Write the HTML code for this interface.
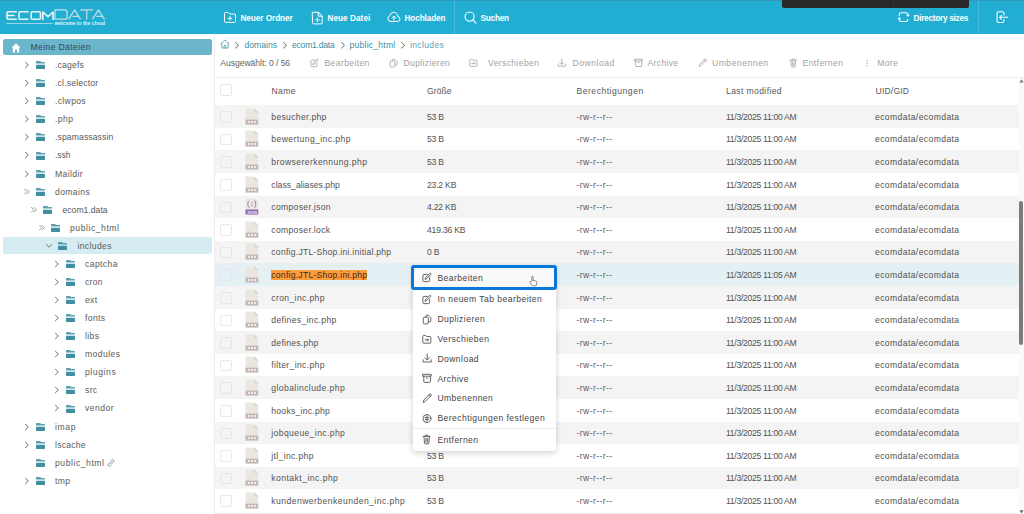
<!DOCTYPE html><html><head><meta charset="utf-8"><style>*{margin:0;padding:0;box-sizing:border-box}
html,body{width:1024px;height:514px;overflow:hidden;background:#fff;font-family:"Liberation Sans",sans-serif}
body{position:relative}
.a{position:absolute;white-space:nowrap}
svg.a{overflow:visible}
#hdr{position:absolute;left:0;top:0;width:1024px;height:34px;background:#22aed2;border-top:1px solid #3197bb}
.ht{position:absolute;color:#fff;font-weight:700;font-size:8.2px;line-height:10px;top:13.5px;white-space:nowrap}
.vd{position:absolute;top:1px;width:1px;height:33px;background:#49bcdb}
.tip{position:absolute;left:781.6px;top:0;width:187.6px;height:8.1px;background:#282828;border-radius:0 0 2px 2px}
.side{position:absolute;left:0;width:214px;height:18px}
.st{position:absolute;font-size:8.6px;color:#5a5a5a;line-height:12px;top:3px;white-space:nowrap;letter-spacing:.22px}
.fo{position:absolute;top:5px;width:9px;height:8px}
.mainb{position:absolute;left:214px;top:34px;width:1px;height:480px;background:#ececec}
.bc{position:absolute;top:38.5px;font-size:8.6px;line-height:12px;color:#3e8ea0;white-space:nowrap}
.tb{position:absolute;top:57px;font-size:8.6px;line-height:12px;color:#a2a2a2;white-space:nowrap;letter-spacing:.2px}
.hd{position:absolute;top:84.5px;font-size:8.6px;line-height:12px;color:#575757;white-space:nowrap;letter-spacing:.15px}
.row{position:absolute;left:215px;width:803.5px;height:22.6px}
.g{background:#f4f4f4}
.sel{background:#e4f0f3}
.cb{position:absolute;left:5px;top:6px;width:11.6px;height:11.6px;border:1px solid #e9e9e9;border-radius:2px;background:#fff}
.g .cb,.sel .cb{background:transparent;border-color:#e6e6e6}
.fi{position:absolute;left:29.5px;top:2.6px}
.c{position:absolute;top:5.5px;font-size:8.6px;line-height:12px;color:#525252;white-space:nowrap;letter-spacing:.15px}
.c1{left:56.3px;letter-spacing:.27px}
.c2{left:212px;letter-spacing:-.2px}
.c3{left:361.5px;color:#5a5a5a;letter-spacing:.4px}
.c4{left:511px;letter-spacing:-.29px}
.c5{left:660px;letter-spacing:.39px}
#menu{position:absolute;left:412.6px;top:266px;width:143px;height:185px;background:#fff;border-radius:3px;box-shadow:0 2px 6px rgba(0,0,0,.18)}
.mi{position:absolute;left:25.5px;font-size:8.6px;line-height:12px;color:#444;white-space:nowrap;letter-spacing:.25px}
.mic{position:absolute;left:10.5px}
#focus{position:absolute;left:411px;top:265px;width:146px;height:25px;border:3px solid #0a76d9;border-radius:3px;background:#f9f9f9}
.u{display:inline-block;transform:scaleX(.55);margin:0 -1.1px}
</style></head><body>
<div id="hdr"></div>
<svg class="a" style="left:0;top:0" width="120" height="34" viewBox="0 0 120 34">
<g fill="none" stroke="#e6f6fa" stroke-width="1.6" stroke-linejoin="round">
<path d="M16.8 11.8H8.3Q7 11.8 7 13.1V17.9Q7 19.2 8.3 19.2H16.8M7.3 15.5H14.6"/>
<path d="M28.6 11.8H20.3Q19 11.8 19 13.1V17.9Q19 19.2 20.3 19.2H28.6"/>
<path d="M32.5 11.8H39.2Q40.5 11.8 40.5 13.1V17.9Q40.5 19.2 39.2 19.2H32.5Q31.2 19.2 31.2 17.9V13.1Q31.2 11.8 32.5 11.8Z"/>
<path d="M42.8 19.9V12L48 16.6L53.1 12V19.9"/>
</g>
<g fill="none" stroke="#c5dde4" stroke-width="1.25" stroke-linejoin="round">
<path d="M55 9.8H64.8Q67.1 9.8 67.1 12.1V16.9Q67.1 19.2 64.8 19.2H55Z"/>
<path d="M68.6 19.4L74.6 9.8L80.6 19.4M72.4 16.4H79"/>
<path d="M80.4 9.8H93M86.7 9.8V19.4"/>
<path d="M92.4 19.4L98.4 9.8L104.5 19.4M96.2 16.4H102.8"/>
</g>
<path d="M6.3 23.5H52.7" stroke="#9ad6e6" stroke-width="1"/>
<text x="54.5" y="25.2" font-family="Liberation Sans" font-weight="700" font-size="4.8" fill="#dff2f8" textLength="50.5" lengthAdjust="spacingAndGlyphs">welcome to the cloud</text>
</svg>
<svg class="a" style="left:223px;top:11px" width="14" height="13" viewBox="0 0 14 13"><g fill="none" stroke="#fff" stroke-width="1" stroke-linejoin="round" stroke-linecap="round">
<path d="M1.5 2.3Q1.5 1.5 2.3 1.5H5.2L6.6 3H11.4Q12.5 3 12.5 4V10.5Q12.5 11.4 11.5 11.4H2.4Q1.5 11.4 1.5 10.5Z"/><path d="M7 5.6V9.2M5.2 7.4H8.8"/></g></svg>
<div class="ht" style="left:240.5px;letter-spacing:-.05px">Neuer Ordner</div>
<svg class="a" style="left:311px;top:10.5px" width="13" height="14" viewBox="0 0 13 14"><g fill="none" stroke="#fff" stroke-width="1" stroke-linejoin="round" stroke-linecap="round">
<path d="M1.6 1.3H7.5L11.2 5V12.1Q11.2 12.9 10.4 12.9H2.4Q1.6 12.9 1.6 12.1Z"/><path d="M7.3 1.5V5.2H11"/><path d="M6.4 7V10.6M4.6 8.8H8.2"/></g></svg>
<div class="ht" style="left:327.5px;letter-spacing:.05px">Neue Datei</div>
<svg class="a" style="left:387px;top:11px" width="14" height="12" viewBox="0 0 14 12"><g fill="none" stroke="#fff" stroke-width="1" stroke-linejoin="round" stroke-linecap="round">
<path d="M3.6 10.5H10.4Q13 10.5 13 8Q13 5.6 10.6 5.4Q10.2 1.3 6.7 1.3Q3.6 1.3 3 4.6Q0.9 5 0.9 7.6Q0.9 10.5 3.6 10.5Z"/><path d="M7 9.3V5.4M5.3 7L7 5.3L8.7 7"/></g></svg>
<div class="ht" style="left:404.5px;letter-spacing:-.1px">Hochladen</div>
<div class="vd" style="left:454.2px"></div>
<svg class="a" style="left:464px;top:10.5px" width="13" height="13" viewBox="0 0 13 13"><g fill="none" stroke="#fff" stroke-width="1.1" stroke-linecap="round">
<circle cx="5.6" cy="5.6" r="4.6"/><path d="M8.9 8.9L12 12.2"/></g></svg>
<div class="ht" style="left:480.5px;letter-spacing:-.2px">Suchen</div>
<div class="tip"></div><div class="a" style="left:893px;top:0;width:1px;height:5px;background:#363636"></div>
<svg class="a" style="left:896px;top:11px" width="15" height="13" viewBox="0 0 15 13"><g fill="none" stroke="#fff" stroke-width="1.1" stroke-linecap="round" stroke-linejoin="round">
<path d="M3.3 4.6V3.5Q3.3 1.7 5.1 1.7H9.8Q11.6 1.7 11.9 3.6"/><path d="M11.7 8.4V8.8Q11.7 10.5 9.9 10.5H5.3Q3.5 10.5 3.5 8.7V7.6"/></g>
<path d="M10.1 3.7H13.9L12 5.9Z M1.4 8.3H5.2L3.3 6.1Z" fill="#fff"/></svg>
<div class="ht" style="left:913.5px;letter-spacing:-.25px">Directory sizes</div>
<div class="vd" style="left:978px"></div>
<svg class="a" style="left:995px;top:11px" width="14" height="13" viewBox="0 0 14 13"><g fill="none" stroke="#fff" stroke-width="1.05" stroke-linecap="round" stroke-linejoin="round">
<path d="M8.9 4V2Q8.9 0.7 7.6 0.7H3.4Q2.1 0.7 2.1 2V10.2Q2.1 11.5 3.4 11.5H7.6Q8.9 11.5 8.9 10.2V8.6"/><path d="M12.8 6.3H4.6M6.5 4.3L4.5 6.3L6.5 8.3"/></g></svg>
<div class="a" style="left:3px;top:38.7px;width:208.6px;height:16.4px;background:#6cb6cb;border-radius:2.5px"></div>
<svg class="a" style="left:11px;top:42.5px" width="10" height="10" viewBox="0 0 10 10"><path d="M5 0.6L0.5 4.6H1.8V9.4H4V6.6H6V9.4H8.2V4.6H9.5Z" fill="#fff"/></svg>
<div class="a" style="left:30.5px;top:40.5px;font-size:8.6px;line-height:12px;color:#2d4a5c;letter-spacing:.375px">Meine Dateien</div>
<svg class="a" style="left:24.5px;top:62.099999999999994px" width="4" height="6" viewBox="0 0 4 6"><path d="M0.5 0.3L3.3 3L0.5 5.7" fill="none" stroke="#666" stroke-width="0.95" stroke-linecap="round" stroke-linejoin="round"/></svg>
<svg class="a" style="left:36.00px;top:61.199999999999996px" width="9" height="8" viewBox="0 0 9 8"><path d="M0.6 0H4.2L5.2 1H8.4Q9 1 9 1.6V2.6H0V0.6Q0 0 0.6 0Z" fill="#5d9fb0"/><rect x="0" y="3.7" width="9" height="4.3" rx="0.7" fill="#3f8fa1"/></svg>
<div class="st" style="left:55.0px;top:59.099999999999994px;letter-spacing:0.183px">.cagefs</div>
<svg class="a" style="left:24.5px;top:80.17px" width="4" height="6" viewBox="0 0 4 6"><path d="M0.5 0.3L3.3 3L0.5 5.7" fill="none" stroke="#666" stroke-width="0.95" stroke-linecap="round" stroke-linejoin="round"/></svg>
<svg class="a" style="left:36.00px;top:79.27px" width="9" height="8" viewBox="0 0 9 8"><path d="M0.6 0H4.2L5.2 1H8.4Q9 1 9 1.6V2.6H0V0.6Q0 0 0.6 0Z" fill="#5d9fb0"/><rect x="0" y="3.7" width="9" height="4.3" rx="0.7" fill="#3f8fa1"/></svg>
<div class="st" style="left:55.0px;top:77.17px;letter-spacing:0.182px">.cl.selector</div>
<svg class="a" style="left:24.5px;top:98.24px" width="4" height="6" viewBox="0 0 4 6"><path d="M0.5 0.3L3.3 3L0.5 5.7" fill="none" stroke="#666" stroke-width="0.95" stroke-linecap="round" stroke-linejoin="round"/></svg>
<svg class="a" style="left:36.00px;top:97.33999999999999px" width="9" height="8" viewBox="0 0 9 8"><path d="M0.6 0H4.2L5.2 1H8.4Q9 1 9 1.6V2.6H0V0.6Q0 0 0.6 0Z" fill="#5d9fb0"/><rect x="0" y="3.7" width="9" height="4.3" rx="0.7" fill="#3f8fa1"/></svg>
<div class="st" style="left:55.0px;top:95.24px;letter-spacing:0.333px">.clwpos</div>
<svg class="a" style="left:24.5px;top:116.31px" width="4" height="6" viewBox="0 0 4 6"><path d="M0.5 0.3L3.3 3L0.5 5.7" fill="none" stroke="#666" stroke-width="0.95" stroke-linecap="round" stroke-linejoin="round"/></svg>
<svg class="a" style="left:36.00px;top:115.41px" width="9" height="8" viewBox="0 0 9 8"><path d="M0.6 0H4.2L5.2 1H8.4Q9 1 9 1.6V2.6H0V0.6Q0 0 0.6 0Z" fill="#5d9fb0"/><rect x="0" y="3.7" width="9" height="4.3" rx="0.7" fill="#3f8fa1"/></svg>
<div class="st" style="left:55.0px;top:113.31px;letter-spacing:0.4px">.php</div>
<svg class="a" style="left:24.5px;top:134.38px" width="4" height="6" viewBox="0 0 4 6"><path d="M0.5 0.3L3.3 3L0.5 5.7" fill="none" stroke="#666" stroke-width="0.95" stroke-linecap="round" stroke-linejoin="round"/></svg>
<svg class="a" style="left:36.00px;top:133.48px" width="9" height="8" viewBox="0 0 9 8"><path d="M0.6 0H4.2L5.2 1H8.4Q9 1 9 1.6V2.6H0V0.6Q0 0 0.6 0Z" fill="#5d9fb0"/><rect x="0" y="3.7" width="9" height="4.3" rx="0.7" fill="#3f8fa1"/></svg>
<div class="st" style="left:55.0px;top:131.38px;letter-spacing:0.117px">.spamassassin</div>
<svg class="a" style="left:24.5px;top:152.45px" width="4" height="6" viewBox="0 0 4 6"><path d="M0.5 0.3L3.3 3L0.5 5.7" fill="none" stroke="#666" stroke-width="0.95" stroke-linecap="round" stroke-linejoin="round"/></svg>
<svg class="a" style="left:36.00px;top:151.54999999999998px" width="9" height="8" viewBox="0 0 9 8"><path d="M0.6 0H4.2L5.2 1H8.4Q9 1 9 1.6V2.6H0V0.6Q0 0 0.6 0Z" fill="#5d9fb0"/><rect x="0" y="3.7" width="9" height="4.3" rx="0.7" fill="#3f8fa1"/></svg>
<div class="st" style="left:55.0px;top:149.45px;letter-spacing:-0.1px">.ssh</div>
<svg class="a" style="left:24.5px;top:170.52px" width="4" height="6" viewBox="0 0 4 6"><path d="M0.5 0.3L3.3 3L0.5 5.7" fill="none" stroke="#666" stroke-width="0.95" stroke-linecap="round" stroke-linejoin="round"/></svg>
<svg class="a" style="left:36.00px;top:169.62px" width="9" height="8" viewBox="0 0 9 8"><path d="M0.6 0H4.2L5.2 1H8.4Q9 1 9 1.6V2.6H0V0.6Q0 0 0.6 0Z" fill="#5d9fb0"/><rect x="0" y="3.7" width="9" height="4.3" rx="0.7" fill="#3f8fa1"/></svg>
<div class="st" style="left:55.0px;top:167.52px;letter-spacing:0.383px">Maildir</div>
<svg class="a" style="left:23.8px;top:188.89000000000001px" width="6" height="6" viewBox="0 0 6 6"><path d="M0.5 0.4L2.8 2.7L0.5 5M3 0.4L5.3 2.7L3 5" fill="none" stroke="#8a8a8a" stroke-width="0.85" stroke-linecap="round" stroke-linejoin="round"/></svg>
<svg class="a" style="left:36.00px;top:187.69px" width="9" height="8" viewBox="0 0 9 8"><path d="M0.6 0H4.2L5.2 1H8.4Q9 1 9 1.6V2.6H0V0.6Q0 0 0.6 0Z" fill="#5d9fb0"/><rect x="0" y="3.7" width="9" height="4.3" rx="0.7" fill="#3f8fa1"/></svg>
<div class="st" style="left:55.0px;top:185.59px;letter-spacing:0.383px">domains</div>
<svg class="a" style="left:31.3px;top:206.96px" width="6" height="6" viewBox="0 0 6 6"><path d="M0.5 0.4L2.8 2.7L0.5 5M3 0.4L5.3 2.7L3 5" fill="none" stroke="#8a8a8a" stroke-width="0.85" stroke-linecap="round" stroke-linejoin="round"/></svg>
<svg class="a" style="left:43.45px;top:205.76px" width="9" height="8" viewBox="0 0 9 8"><path d="M0.6 0H4.2L5.2 1H8.4Q9 1 9 1.6V2.6H0V0.6Q0 0 0.6 0Z" fill="#5d9fb0"/><rect x="0" y="3.7" width="9" height="4.3" rx="0.7" fill="#3f8fa1"/></svg>
<div class="st" style="left:62.5px;top:203.66px;letter-spacing:0.022px">ecom1.data</div>
<svg class="a" style="left:38.8px;top:225.03px" width="6" height="6" viewBox="0 0 6 6"><path d="M0.5 0.4L2.8 2.7L0.5 5M3 0.4L5.3 2.7L3 5" fill="none" stroke="#8a8a8a" stroke-width="0.85" stroke-linecap="round" stroke-linejoin="round"/></svg>
<svg class="a" style="left:50.90px;top:223.82999999999998px" width="9" height="8" viewBox="0 0 9 8"><path d="M0.6 0H4.2L5.2 1H8.4Q9 1 9 1.6V2.6H0V0.6Q0 0 0.6 0Z" fill="#5d9fb0"/><rect x="0" y="3.7" width="9" height="4.3" rx="0.7" fill="#3f8fa1"/></svg>
<div class="st" style="left:70.0px;top:221.73px;letter-spacing:0.55px">public_html</div>
<div class="a" style="left:3px;top:237.20px;width:208.6px;height:17px;background:#d5ecf2;border-radius:2px"></div>
<svg class="a" style="left:45.8px;top:243.90px" width="6" height="4" viewBox="0 0 6 4"><path d="M0.4 0.6L3 3.2L5.6 0.6" fill="none" stroke="#666" stroke-width="0.95" stroke-linecap="round" stroke-linejoin="round"/></svg>
<svg class="a" style="left:58.35px;top:241.9px" width="9" height="8" viewBox="0 0 9 8"><path d="M0.6 0H4.2L5.2 1H8.4Q9 1 9 1.6V2.6H0V0.6Q0 0 0.6 0Z" fill="#5d9fb0"/><rect x="0" y="3.7" width="9" height="4.3" rx="0.7" fill="#3f8fa1"/></svg>
<div class="st" style="left:77.5px;top:239.8px;letter-spacing:0.343px">includes</div>
<svg class="a" style="left:54.5px;top:260.87px" width="4" height="6" viewBox="0 0 4 6"><path d="M0.5 0.3L3.3 3L0.5 5.7" fill="none" stroke="#666" stroke-width="0.95" stroke-linecap="round" stroke-linejoin="round"/></svg>
<svg class="a" style="left:65.80px;top:259.97px" width="9" height="8" viewBox="0 0 9 8"><path d="M0.6 0H4.2L5.2 1H8.4Q9 1 9 1.6V2.6H0V0.6Q0 0 0.6 0Z" fill="#5d9fb0"/><rect x="0" y="3.7" width="9" height="4.3" rx="0.7" fill="#3f8fa1"/></svg>
<div class="st" style="left:85.0px;top:257.87px;letter-spacing:0.4px">captcha</div>
<svg class="a" style="left:54.5px;top:278.94px" width="4" height="6" viewBox="0 0 4 6"><path d="M0.5 0.3L3.3 3L0.5 5.7" fill="none" stroke="#666" stroke-width="0.95" stroke-linecap="round" stroke-linejoin="round"/></svg>
<svg class="a" style="left:65.80px;top:278.04px" width="9" height="8" viewBox="0 0 9 8"><path d="M0.6 0H4.2L5.2 1H8.4Q9 1 9 1.6V2.6H0V0.6Q0 0 0.6 0Z" fill="#5d9fb0"/><rect x="0" y="3.7" width="9" height="4.3" rx="0.7" fill="#3f8fa1"/></svg>
<div class="st" style="left:85.0px;top:275.94px;letter-spacing:0.3px">cron</div>
<svg class="a" style="left:54.5px;top:297.01px" width="4" height="6" viewBox="0 0 4 6"><path d="M0.5 0.3L3.3 3L0.5 5.7" fill="none" stroke="#666" stroke-width="0.95" stroke-linecap="round" stroke-linejoin="round"/></svg>
<svg class="a" style="left:65.80px;top:296.11px" width="9" height="8" viewBox="0 0 9 8"><path d="M0.6 0H4.2L5.2 1H8.4Q9 1 9 1.6V2.6H0V0.6Q0 0 0.6 0Z" fill="#5d9fb0"/><rect x="0" y="3.7" width="9" height="4.3" rx="0.7" fill="#3f8fa1"/></svg>
<div class="st" style="left:85.0px;top:294.01px;letter-spacing:0.3px">ext</div>
<svg class="a" style="left:54.5px;top:315.08px" width="4" height="6" viewBox="0 0 4 6"><path d="M0.5 0.3L3.3 3L0.5 5.7" fill="none" stroke="#666" stroke-width="0.95" stroke-linecap="round" stroke-linejoin="round"/></svg>
<svg class="a" style="left:65.80px;top:314.18px" width="9" height="8" viewBox="0 0 9 8"><path d="M0.6 0H4.2L5.2 1H8.4Q9 1 9 1.6V2.6H0V0.6Q0 0 0.6 0Z" fill="#5d9fb0"/><rect x="0" y="3.7" width="9" height="4.3" rx="0.7" fill="#3f8fa1"/></svg>
<div class="st" style="left:85.0px;top:312.08px;letter-spacing:0.375px">fonts</div>
<svg class="a" style="left:54.5px;top:333.15px" width="4" height="6" viewBox="0 0 4 6"><path d="M0.5 0.3L3.3 3L0.5 5.7" fill="none" stroke="#666" stroke-width="0.95" stroke-linecap="round" stroke-linejoin="round"/></svg>
<svg class="a" style="left:65.80px;top:332.25px" width="9" height="8" viewBox="0 0 9 8"><path d="M0.6 0H4.2L5.2 1H8.4Q9 1 9 1.6V2.6H0V0.6Q0 0 0.6 0Z" fill="#5d9fb0"/><rect x="0" y="3.7" width="9" height="4.3" rx="0.7" fill="#3f8fa1"/></svg>
<div class="st" style="left:85.0px;top:330.15px;letter-spacing:0.4px">libs</div>
<svg class="a" style="left:54.5px;top:351.22px" width="4" height="6" viewBox="0 0 4 6"><path d="M0.5 0.3L3.3 3L0.5 5.7" fill="none" stroke="#666" stroke-width="0.95" stroke-linecap="round" stroke-linejoin="round"/></svg>
<svg class="a" style="left:65.80px;top:350.32000000000005px" width="9" height="8" viewBox="0 0 9 8"><path d="M0.6 0H4.2L5.2 1H8.4Q9 1 9 1.6V2.6H0V0.6Q0 0 0.6 0Z" fill="#5d9fb0"/><rect x="0" y="3.7" width="9" height="4.3" rx="0.7" fill="#3f8fa1"/></svg>
<div class="st" style="left:85.0px;top:348.22px;letter-spacing:0.433px">modules</div>
<svg class="a" style="left:54.5px;top:369.29px" width="4" height="6" viewBox="0 0 4 6"><path d="M0.5 0.3L3.3 3L0.5 5.7" fill="none" stroke="#666" stroke-width="0.95" stroke-linecap="round" stroke-linejoin="round"/></svg>
<svg class="a" style="left:65.80px;top:368.39000000000004px" width="9" height="8" viewBox="0 0 9 8"><path d="M0.6 0H4.2L5.2 1H8.4Q9 1 9 1.6V2.6H0V0.6Q0 0 0.6 0Z" fill="#5d9fb0"/><rect x="0" y="3.7" width="9" height="4.3" rx="0.7" fill="#3f8fa1"/></svg>
<div class="st" style="left:85.0px;top:366.29px;letter-spacing:0.583px">plugins</div>
<svg class="a" style="left:54.5px;top:387.36px" width="4" height="6" viewBox="0 0 4 6"><path d="M0.5 0.3L3.3 3L0.5 5.7" fill="none" stroke="#666" stroke-width="0.95" stroke-linecap="round" stroke-linejoin="round"/></svg>
<svg class="a" style="left:65.80px;top:386.46000000000004px" width="9" height="8" viewBox="0 0 9 8"><path d="M0.6 0H4.2L5.2 1H8.4Q9 1 9 1.6V2.6H0V0.6Q0 0 0.6 0Z" fill="#5d9fb0"/><rect x="0" y="3.7" width="9" height="4.3" rx="0.7" fill="#3f8fa1"/></svg>
<div class="st" style="left:85.0px;top:384.36px;letter-spacing:0.35px">src</div>
<svg class="a" style="left:54.5px;top:405.43px" width="4" height="6" viewBox="0 0 4 6"><path d="M0.5 0.3L3.3 3L0.5 5.7" fill="none" stroke="#666" stroke-width="0.95" stroke-linecap="round" stroke-linejoin="round"/></svg>
<svg class="a" style="left:65.80px;top:404.53000000000003px" width="9" height="8" viewBox="0 0 9 8"><path d="M0.6 0H4.2L5.2 1H8.4Q9 1 9 1.6V2.6H0V0.6Q0 0 0.6 0Z" fill="#5d9fb0"/><rect x="0" y="3.7" width="9" height="4.3" rx="0.7" fill="#3f8fa1"/></svg>
<div class="st" style="left:85.0px;top:402.43px;letter-spacing:0.46px">vendor</div>
<svg class="a" style="left:24.5px;top:423.5px" width="4" height="6" viewBox="0 0 4 6"><path d="M0.5 0.3L3.3 3L0.5 5.7" fill="none" stroke="#666" stroke-width="0.95" stroke-linecap="round" stroke-linejoin="round"/></svg>
<svg class="a" style="left:36.00px;top:422.6px" width="9" height="8" viewBox="0 0 9 8"><path d="M0.6 0H4.2L5.2 1H8.4Q9 1 9 1.6V2.6H0V0.6Q0 0 0.6 0Z" fill="#5d9fb0"/><rect x="0" y="3.7" width="9" height="4.3" rx="0.7" fill="#3f8fa1"/></svg>
<div class="st" style="left:55.0px;top:420.5px;letter-spacing:0.6px">imap</div>
<svg class="a" style="left:24.5px;top:441.57px" width="4" height="6" viewBox="0 0 4 6"><path d="M0.5 0.3L3.3 3L0.5 5.7" fill="none" stroke="#666" stroke-width="0.95" stroke-linecap="round" stroke-linejoin="round"/></svg>
<svg class="a" style="left:36.00px;top:440.67px" width="9" height="8" viewBox="0 0 9 8"><path d="M0.6 0H4.2L5.2 1H8.4Q9 1 9 1.6V2.6H0V0.6Q0 0 0.6 0Z" fill="#5d9fb0"/><rect x="0" y="3.7" width="9" height="4.3" rx="0.7" fill="#3f8fa1"/></svg>
<div class="st" style="left:55.0px;top:438.57px;letter-spacing:0.25px">lscache</div>
<svg class="a" style="left:36.00px;top:458.74px" width="9" height="8" viewBox="0 0 9 8"><path d="M0.6 0H4.2L5.2 1H8.4Q9 1 9 1.6V2.6H0V0.6Q0 0 0.6 0Z" fill="#5d9fb0"/><rect x="0" y="3.7" width="9" height="4.3" rx="0.7" fill="#3f8fa1"/></svg>
<div class="st" style="left:55.0px;top:456.64px;letter-spacing:0.55px">public_html</div>
<svg class="a" style="left:106.5px;top:459.03999999999996px" width="8" height="8" viewBox="0 0 8 8"><g fill="none" stroke="#888" stroke-width="0.8" stroke-linecap="round"><path d="M3.4 2.2L4.6 1Q5.6 0 6.6 1Q7.6 2 6.6 3L5.4 4.2"/><path d="M4.6 5.8L3.4 7Q2.4 8 1.4 7Q0.4 6 1.4 5L2.6 3.8"/><path d="M2.8 5.2L5.2 2.8"/></g></svg>
<svg class="a" style="left:24.5px;top:477.71px" width="4" height="6" viewBox="0 0 4 6"><path d="M0.5 0.3L3.3 3L0.5 5.7" fill="none" stroke="#666" stroke-width="0.95" stroke-linecap="round" stroke-linejoin="round"/></svg>
<svg class="a" style="left:36.00px;top:476.81px" width="9" height="8" viewBox="0 0 9 8"><path d="M0.6 0H4.2L5.2 1H8.4Q9 1 9 1.6V2.6H0V0.6Q0 0 0.6 0Z" fill="#5d9fb0"/><rect x="0" y="3.7" width="9" height="4.3" rx="0.7" fill="#3f8fa1"/></svg>
<div class="st" style="left:55.0px;top:474.71px;letter-spacing:0.4px">tmp</div>
<div class="mainb"></div>
<svg class="a" style="left:220.2px;top:38.9px" width="10" height="10" viewBox="0 0 10 10"><g fill="none" stroke="#5ea5b7" stroke-width="0.9" stroke-linejoin="round" stroke-linecap="round"><path d="M0.8 4.9L5 0.9L9.2 4.9M1.8 4V8.5Q1.8 9 2.3 9H7.7Q8.2 9 8.2 8.5V4"/><path d="M4 9V6.6H6V9"/></g></svg>
<svg class="a" style="left:235.2px;top:41.5px" width="5" height="7" viewBox="0 0 5 7"><path d="M0.6 0.5L3.5 3.3L0.6 6.1" fill="none" stroke="#555" stroke-width="0.9" stroke-linecap="round" stroke-linejoin="round"/></svg>
<svg class="a" style="left:282.8px;top:41.5px" width="5" height="7" viewBox="0 0 5 7"><path d="M0.6 0.5L3.5 3.3L0.6 6.1" fill="none" stroke="#555" stroke-width="0.9" stroke-linecap="round" stroke-linejoin="round"/></svg>
<svg class="a" style="left:340.8px;top:41.5px" width="5" height="7" viewBox="0 0 5 7"><path d="M0.6 0.5L3.5 3.3L0.6 6.1" fill="none" stroke="#555" stroke-width="0.9" stroke-linecap="round" stroke-linejoin="round"/></svg>
<svg class="a" style="left:401px;top:41.5px" width="5" height="7" viewBox="0 0 5 7"><path d="M0.6 0.5L3.5 3.3L0.6 6.1" fill="none" stroke="#555" stroke-width="0.9" stroke-linecap="round" stroke-linejoin="round"/></svg>
<div class="bc" style="left:244.5px;letter-spacing:.02px">domains</div>
<div class="bc" style="left:292px;letter-spacing:-.24px">ecom1.data</div>
<div class="bc" style="left:349.5px;letter-spacing:.22px">public_html</div>
<div class="bc" style="left:410px;color:#5ca3b5;letter-spacing:.34px">includes</div>
<div class="tb" style="left:220.3px;color:#646464;letter-spacing:-.05px">Ausgewählt: 0 / 56</div>
<svg class="a" style="left:309.5px;top:58px" width="10" height="10" viewBox="0 0 11 11"><g fill="none" stroke="#a9a9a9" stroke-width="0.95" stroke-linejoin="round" stroke-linecap="round"><path d="M5.2 2.4H1.9Q0.9 2.4 0.9 3.4V8.6Q0.9 9.6 1.9 9.6H6.6Q7.6 9.6 7.6 8.6V5.6"/><path d="M3.2 7.1L3.5 5.6L7.6 1.5Q8.2 1 8.7 1.5Q9.2 2 8.7 2.6L4.6 6.7Z"/></g></svg>
<div class="tb" style="left:324.5px;letter-spacing:0.37px">Bearbeiten</div>
<svg class="a" style="left:389.0px;top:58px" width="10" height="10" viewBox="0 0 11 11"><g fill="none" stroke="#a9a9a9" stroke-width="0.95" stroke-linejoin="round" stroke-linecap="round"><path d="M3.9 3V2.1Q3.9 1.3 4.7 1.3H6.6L8.8 3.5V7Q8.8 7.8 8 7.8H6.5"/><path d="M1.3 4Q1.3 3.2 2.1 3.2H5.5Q6.3 3.2 6.3 4V9.1Q6.3 9.9 5.5 9.9H2.1Q1.3 9.9 1.3 9.1Z"/></g></svg>
<div class="tb" style="left:403.5px;letter-spacing:0.34px">Duplizieren</div>
<svg class="a" style="left:469.0px;top:58px" width="10" height="10" viewBox="0 0 11 11"><g fill="none" stroke="#a9a9a9" stroke-width="0.95" stroke-linejoin="round" stroke-linecap="round"><path d="M0.8 2.2Q0.8 1.4 1.6 1.4H3.6L4.6 2.5H8Q8.8 2.5 8.8 3.3V8.4Q8.8 9.2 8 9.2H1.6Q0.8 9.2 0.8 8.4Z"/><path d="M3 5.9H6.4M5.1 4.6L6.4 5.9L5.1 7.2"/></g></svg>
<div class="tb" style="left:488px;letter-spacing:0.37px">Verschieben</div>
<svg class="a" style="left:557.0px;top:58px" width="10" height="10" viewBox="0 0 11 11"><g fill="none" stroke="#a9a9a9" stroke-width="0.95" stroke-linejoin="round" stroke-linecap="round"><path d="M5.2 1V6.8M3 4.8L5.2 7L7.4 4.8"/><path d="M1.2 6.8V9H9.2V6.8"/></g></svg>
<div class="tb" style="left:572.5px;letter-spacing:0.5px">Download</div>
<svg class="a" style="left:633.5px;top:58px" width="10" height="10" viewBox="0 0 11 11"><g fill="none" stroke="#a9a9a9" stroke-width="0.95" stroke-linejoin="round" stroke-linecap="round"><path d="M1 1.3H9.2V3.2H1Z"/><path d="M1.8 3.2V8.6Q1.8 9.4 2.6 9.4H7.6Q8.4 9.4 8.4 8.6V3.2"/><path d="M4.4 5H5.8"/></g></svg>
<div class="tb" style="left:647.5px;letter-spacing:0.33px">Archive</div>
<svg class="a" style="left:697.5px;top:58px" width="10" height="10" viewBox="0 0 11 11"><g fill="none" stroke="#a9a9a9" stroke-width="0.95" stroke-linejoin="round" stroke-linecap="round"><path d="M1.3 9.2L1.8 7L7.6 1.2Q8.3 0.5 9 1.2Q9.6 1.9 9 2.6L3.2 8.4Z"/><path d="M6.8 2L8.3 3.5"/></g></svg>
<div class="tb" style="left:712px;letter-spacing:0.5px">Umbenennen</div>
<svg class="a" style="left:788.5px;top:58px" width="10" height="10" viewBox="0 0 11 11"><g fill="none" stroke="#a9a9a9" stroke-width="0.95" stroke-linejoin="round" stroke-linecap="round"><path d="M1.2 2.4H8.2M3.4 2.2V1.2H6V2.2"/><path d="M2 2.6L2.5 9.2Q2.6 9.8 3.2 9.8H6.2Q6.8 9.8 6.9 9.2L7.4 2.6"/><path d="M4 4.4V8.2M5.4 4.4V8.2"/></g></svg>
<div class="tb" style="left:802.5px;letter-spacing:0.4px">Entfernen</div>
<div class="a" style="left:866.3px;top:59.8px;width:1.3px;height:1.3px;background:#b5b5b5;border-radius:1px;box-shadow:0 2.6px 0 #b5b5b5,0 5.2px 0 #b5b5b5"></div>
<div class="tb" style="left:877.3px;letter-spacing:.3px">More</div>
<div class="a" style="left:215px;top:77px;width:809px;height:1px;background:#ededed"></div>
<div class="a" style="left:220px;top:84px;width:11.6px;height:11.6px;border:1px solid #e6e6e6;border-radius:2px"></div>
<div class="hd" style="left:271.5px;letter-spacing:0.37px">Name</div>
<div class="hd" style="left:427px;letter-spacing:0.07px">Größe</div>
<div class="hd" style="left:576.5px;letter-spacing:0.5px">Berechtigungen</div>
<div class="hd" style="left:726px;letter-spacing:0.375px">Last modified</div>
<div class="hd" style="left:875.5px;letter-spacing:0.18px">UID/GID</div>
<div class="a" style="left:1018.5px;top:78px;width:5.5px;height:436px;background:#fafafa"></div>
<svg class="a" style="left:1019px;top:78.5px" width="5" height="4" viewBox="0 0 5 4"><path d="M2.5 0.3L4.6 3.6H0.4Z" fill="#7d7d7d"/></svg>
<svg class="a" style="left:1019px;top:509.5px" width="5" height="4" viewBox="0 0 5 4"><path d="M2.5 3.6L4.6 0.3H0.4Z" fill="#6d6d6d"/></svg>
<div class="a" style="left:1019.2px;top:201px;width:3.4px;height:143.5px;background:#7b7b7b;border-radius:2px"></div>
<div class="row g" style="top:105.25px">
<div class="cb"></div>
<svg class="fi" width="14" height="17" viewBox="0 0 14 17"><path d="M0.5 0.6H9.6L13.3 4.3V11.5H0.5Z" fill="#e9e7df"/><path d="M9.6 0.6L13.3 4.3H9.6Z" fill="#d8d4c9"/><rect x="0.5" y="11.5" width="12.8" height="5.1" fill="#c5b8b4"/><circle cx="4" cy="14.05" r="0.95" fill="#fff"/><circle cx="7.05" cy="14.05" r="0.95" fill="#fff"/><circle cx="10.1" cy="14.05" r="0.95" fill="#fff"/></svg>
<div class="c c1" style="letter-spacing:0.314px">besucher.php</div>
<div class="c c2">53 B</div>
<div class="c c3">-rw-r--r--</div>
<div class="c c4">11/3/2025 11:00 AM</div>
<div class="c c5">ecomdata/ecomdata</div>
</div>
<div class="row" style="top:127.85px">
<div class="cb"></div>
<svg class="fi" width="14" height="17" viewBox="0 0 14 17"><path d="M0.5 0.6H9.6L13.3 4.3V11.5H0.5Z" fill="#e9e7df"/><path d="M9.6 0.6L13.3 4.3H9.6Z" fill="#d8d4c9"/><rect x="0.5" y="11.5" width="12.8" height="5.1" fill="#c5b8b4"/><circle cx="4" cy="14.05" r="0.95" fill="#fff"/><circle cx="7.05" cy="14.05" r="0.95" fill="#fff"/><circle cx="10.1" cy="14.05" r="0.95" fill="#fff"/></svg>
<div class="c c1" style="letter-spacing:0.406px">bewertung_inc.php</div>
<div class="c c2">53 B</div>
<div class="c c3">-rw-r--r--</div>
<div class="c c4">11/3/2025 11:00 AM</div>
<div class="c c5">ecomdata/ecomdata</div>
</div>
<div class="row g" style="top:150.45px">
<div class="cb"></div>
<svg class="fi" width="14" height="17" viewBox="0 0 14 17"><path d="M0.5 0.6H9.6L13.3 4.3V11.5H0.5Z" fill="#e9e7df"/><path d="M9.6 0.6L13.3 4.3H9.6Z" fill="#d8d4c9"/><rect x="0.5" y="11.5" width="12.8" height="5.1" fill="#c5b8b4"/><circle cx="4" cy="14.05" r="0.95" fill="#fff"/><circle cx="7.05" cy="14.05" r="0.95" fill="#fff"/><circle cx="10.1" cy="14.05" r="0.95" fill="#fff"/></svg>
<div class="c c1" style="letter-spacing:0.411px">browsererkennung.php</div>
<div class="c c2">53 B</div>
<div class="c c3">-rw-r--r--</div>
<div class="c c4">11/3/2025 11:00 AM</div>
<div class="c c5">ecomdata/ecomdata</div>
</div>
<div class="row" style="top:173.05px">
<div class="cb"></div>
<svg class="fi" width="14" height="17" viewBox="0 0 14 17"><path d="M0.5 0.6H9.6L13.3 4.3V11.5H0.5Z" fill="#e9e7df"/><path d="M9.6 0.6L13.3 4.3H9.6Z" fill="#d8d4c9"/><rect x="0.5" y="11.5" width="12.8" height="5.1" fill="#c5b8b4"/><circle cx="4" cy="14.05" r="0.95" fill="#fff"/><circle cx="7.05" cy="14.05" r="0.95" fill="#fff"/><circle cx="10.1" cy="14.05" r="0.95" fill="#fff"/></svg>
<div class="c c1" style="letter-spacing:0.037px">class_aliases.php</div>
<div class="c c2">23.2 KB</div>
<div class="c c3">-rw-r--r--</div>
<div class="c c4">11/3/2025 11:00 AM</div>
<div class="c c5">ecomdata/ecomdata</div>
</div>
<div class="row g" style="top:195.65px">
<div class="cb"></div>
<svg class="fi" width="14" height="17" viewBox="0 0 14 17"><path d="M0.5 0.6H9.6L13.3 4.3V11.5H0.5Z" fill="#ebe9e2"/><path d="M9.6 0.6L13.3 4.3H9.6Z" fill="#d8d4c9"/><g fill="none" stroke="#9b72bb" stroke-width="0.9" stroke-linecap="round"><path d="M4.1 3.2Q3.1 3.2 3.1 4.2V5.3Q3.1 6.3 2.4 6.3Q3.1 6.3 3.1 7.3V8.4Q3.1 9.4 4.1 9.4"/><path d="M9.5 3.2Q10.5 3.2 10.5 4.2V5.3Q10.5 6.3 11.2 6.3Q10.5 6.3 10.5 7.3V8.4Q10.5 9.4 9.5 9.4"/></g><circle cx="6.8" cy="5" r="0.65" fill="#9b72bb"/><circle cx="6.8" cy="7.7" r="0.65" fill="#9b72bb"/><rect x="0.5" y="11.5" width="12.8" height="5.1" fill="#8f68b3"/><text x="6.9" y="15.6" text-anchor="middle" font-family="Liberation Sans" font-weight="700" font-size="4" fill="#efe8f5" textLength="10" lengthAdjust="spacingAndGlyphs">JSON</text></svg>
<div class="c c1" style="letter-spacing:0.32px">composer.json</div>
<div class="c c2">4.22 KB</div>
<div class="c c3">-rw-r--r--</div>
<div class="c c4">11/3/2025 11:00 AM</div>
<div class="c c5">ecomdata/ecomdata</div>
</div>
<div class="row" style="top:218.25px">
<div class="cb"></div>
<svg class="fi" width="14" height="17" viewBox="0 0 14 17"><path d="M0.5 0.6H9.6L13.3 4.3V11.5H0.5Z" fill="#e9e7df"/><path d="M9.6 0.6L13.3 4.3H9.6Z" fill="#d8d4c9"/><rect x="0.5" y="11.5" width="12.8" height="5.1" fill="#c5b8b4"/><circle cx="4" cy="14.05" r="0.95" fill="#fff"/><circle cx="7.05" cy="14.05" r="0.95" fill="#fff"/><circle cx="10.1" cy="14.05" r="0.95" fill="#fff"/></svg>
<div class="c c1" style="letter-spacing:0.32px">composer.lock</div>
<div class="c c2">419.36 KB</div>
<div class="c c3">-rw-r--r--</div>
<div class="c c4">11/3/2025 11:00 AM</div>
<div class="c c5">ecomdata/ecomdata</div>
</div>
<div class="row g" style="top:240.85px">
<div class="cb"></div>
<svg class="fi" width="14" height="17" viewBox="0 0 14 17"><path d="M0.5 0.6H9.6L13.3 4.3V11.5H0.5Z" fill="#e9e7df"/><path d="M9.6 0.6L13.3 4.3H9.6Z" fill="#d8d4c9"/><rect x="0.5" y="11.5" width="12.8" height="5.1" fill="#c5b8b4"/><circle cx="4" cy="14.05" r="0.95" fill="#fff"/><circle cx="7.05" cy="14.05" r="0.95" fill="#fff"/><circle cx="10.1" cy="14.05" r="0.95" fill="#fff"/></svg>
<div class="c c1" style="letter-spacing:0.252px">config.JTL-Shop.ini.initial.php</div>
<div class="c c2">0 B</div>
<div class="c c3">-rw-r--r--</div>
<div class="c c4">11/3/2025 11:00 AM</div>
<div class="c c5">ecomdata/ecomdata</div>
</div>
<div class="row sel" style="top:263.45px">
<div class="cb"></div>
<svg class="fi" width="14" height="17" viewBox="0 0 14 17"><path d="M0.5 0.6H9.6L13.3 4.3V11.5H0.5Z" fill="#e9e7df"/><path d="M9.6 0.6L13.3 4.3H9.6Z" fill="#d8d4c9"/><rect x="0.5" y="11.5" width="12.8" height="5.1" fill="#c5b8b4"/><circle cx="4" cy="14.05" r="0.95" fill="#fff"/><circle cx="7.05" cy="14.05" r="0.95" fill="#fff"/><circle cx="10.1" cy="14.05" r="0.95" fill="#fff"/></svg>
<div class="c c1" style="background:#fe9c3a;color:#3a2a1a;top:6.25px;padding:0;line-height:10.1px;letter-spacing:0.25px">config.JTL-Shop.ini.php</div>
<div class="c c3">-rw-r--r--</div>
<div class="c c4">11/3/2025 11:05 AM</div>
<div class="c c5">ecomdata/ecomdata</div>
</div>
<div class="row g" style="top:286.05px">
<div class="cb"></div>
<svg class="fi" width="14" height="17" viewBox="0 0 14 17"><path d="M0.5 0.6H9.6L13.3 4.3V11.5H0.5Z" fill="#e9e7df"/><path d="M9.6 0.6L13.3 4.3H9.6Z" fill="#d8d4c9"/><rect x="0.5" y="11.5" width="12.8" height="5.1" fill="#c5b8b4"/><circle cx="4" cy="14.05" r="0.95" fill="#fff"/><circle cx="7.05" cy="14.05" r="0.95" fill="#fff"/><circle cx="10.1" cy="14.05" r="0.95" fill="#fff"/></svg>
<div class="c c1" style="letter-spacing:0.364px">cron_inc.php</div>
<div class="c c3">-rw-r--r--</div>
<div class="c c4">11/3/2025 11:00 AM</div>
<div class="c c5">ecomdata/ecomdata</div>
</div>
<div class="row" style="top:308.65px">
<div class="cb"></div>
<svg class="fi" width="14" height="17" viewBox="0 0 14 17"><path d="M0.5 0.6H9.6L13.3 4.3V11.5H0.5Z" fill="#e9e7df"/><path d="M9.6 0.6L13.3 4.3H9.6Z" fill="#d8d4c9"/><rect x="0.5" y="11.5" width="12.8" height="5.1" fill="#c5b8b4"/><circle cx="4" cy="14.05" r="0.95" fill="#fff"/><circle cx="7.05" cy="14.05" r="0.95" fill="#fff"/><circle cx="10.1" cy="14.05" r="0.95" fill="#fff"/></svg>
<div class="c c1" style="letter-spacing:0.343px">defines_inc.php</div>
<div class="c c3">-rw-r--r--</div>
<div class="c c4">11/3/2025 11:00 AM</div>
<div class="c c5">ecomdata/ecomdata</div>
</div>
<div class="row g" style="top:331.25px">
<div class="cb"></div>
<svg class="fi" width="14" height="17" viewBox="0 0 14 17"><path d="M0.5 0.6H9.6L13.3 4.3V11.5H0.5Z" fill="#e9e7df"/><path d="M9.6 0.6L13.3 4.3H9.6Z" fill="#d8d4c9"/><rect x="0.5" y="11.5" width="12.8" height="5.1" fill="#c5b8b4"/><circle cx="4" cy="14.05" r="0.95" fill="#fff"/><circle cx="7.05" cy="14.05" r="0.95" fill="#fff"/><circle cx="10.1" cy="14.05" r="0.95" fill="#fff"/></svg>
<div class="c c1" style="letter-spacing:0.26px">defines.php</div>
<div class="c c3">-rw-r--r--</div>
<div class="c c4">11/3/2025 11:00 AM</div>
<div class="c c5">ecomdata/ecomdata</div>
</div>
<div class="row" style="top:353.85px">
<div class="cb"></div>
<svg class="fi" width="14" height="17" viewBox="0 0 14 17"><path d="M0.5 0.6H9.6L13.3 4.3V11.5H0.5Z" fill="#e9e7df"/><path d="M9.6 0.6L13.3 4.3H9.6Z" fill="#d8d4c9"/><rect x="0.5" y="11.5" width="12.8" height="5.1" fill="#c5b8b4"/><circle cx="4" cy="14.05" r="0.95" fill="#fff"/><circle cx="7.05" cy="14.05" r="0.95" fill="#fff"/><circle cx="10.1" cy="14.05" r="0.95" fill="#fff"/></svg>
<div class="c c1" style="letter-spacing:0.338px">filter_inc.php</div>
<div class="c c3">-rw-r--r--</div>
<div class="c c4">11/3/2025 11:00 AM</div>
<div class="c c5">ecomdata/ecomdata</div>
</div>
<div class="row g" style="top:376.45px">
<div class="cb"></div>
<svg class="fi" width="14" height="17" viewBox="0 0 14 17"><path d="M0.5 0.6H9.6L13.3 4.3V11.5H0.5Z" fill="#e9e7df"/><path d="M9.6 0.6L13.3 4.3H9.6Z" fill="#d8d4c9"/><rect x="0.5" y="11.5" width="12.8" height="5.1" fill="#c5b8b4"/><circle cx="4" cy="14.05" r="0.95" fill="#fff"/><circle cx="7.05" cy="14.05" r="0.95" fill="#fff"/><circle cx="10.1" cy="14.05" r="0.95" fill="#fff"/></svg>
<div class="c c1" style="letter-spacing:0.406px">globalinclude.php</div>
<div class="c c3">-rw-r--r--</div>
<div class="c c4">11/3/2025 11:00 AM</div>
<div class="c c5">ecomdata/ecomdata</div>
</div>
<div class="row" style="top:399.05px">
<div class="cb"></div>
<svg class="fi" width="14" height="17" viewBox="0 0 14 17"><path d="M0.5 0.6H9.6L13.3 4.3V11.5H0.5Z" fill="#e9e7df"/><path d="M9.6 0.6L13.3 4.3H9.6Z" fill="#d8d4c9"/><rect x="0.5" y="11.5" width="12.8" height="5.1" fill="#c5b8b4"/><circle cx="4" cy="14.05" r="0.95" fill="#fff"/><circle cx="7.05" cy="14.05" r="0.95" fill="#fff"/><circle cx="10.1" cy="14.05" r="0.95" fill="#fff"/></svg>
<div class="c c1" style="letter-spacing:0.25px">hooks_inc.php</div>
<div class="c c3">-rw-r--r--</div>
<div class="c c4">11/3/2025 11:00 AM</div>
<div class="c c5">ecomdata/ecomdata</div>
</div>
<div class="row g" style="top:421.65px">
<div class="cb"></div>
<svg class="fi" width="14" height="17" viewBox="0 0 14 17"><path d="M0.5 0.6H9.6L13.3 4.3V11.5H0.5Z" fill="#e9e7df"/><path d="M9.6 0.6L13.3 4.3H9.6Z" fill="#d8d4c9"/><rect x="0.5" y="11.5" width="12.8" height="5.1" fill="#c5b8b4"/><circle cx="4" cy="14.05" r="0.95" fill="#fff"/><circle cx="7.05" cy="14.05" r="0.95" fill="#fff"/><circle cx="10.1" cy="14.05" r="0.95" fill="#fff"/></svg>
<div class="c c1" style="letter-spacing:0.38px">jobqueue_inc.php</div>
<div class="c c3">-rw-r--r--</div>
<div class="c c4">11/3/2025 11:00 AM</div>
<div class="c c5">ecomdata/ecomdata</div>
</div>
<div class="row" style="top:444.25px">
<div class="cb"></div>
<svg class="fi" width="14" height="17" viewBox="0 0 14 17"><path d="M0.5 0.6H9.6L13.3 4.3V11.5H0.5Z" fill="#e9e7df"/><path d="M9.6 0.6L13.3 4.3H9.6Z" fill="#d8d4c9"/><rect x="0.5" y="11.5" width="12.8" height="5.1" fill="#c5b8b4"/><circle cx="4" cy="14.05" r="0.95" fill="#fff"/><circle cx="7.05" cy="14.05" r="0.95" fill="#fff"/><circle cx="10.1" cy="14.05" r="0.95" fill="#fff"/></svg>
<div class="c c1" style="letter-spacing:0.35px">jtl_inc.php</div>
<div class="c c2">53 B</div>
<div class="c c3">-rw-r--r--</div>
<div class="c c4">11/3/2025 11:00 AM</div>
<div class="c c5">ecomdata/ecomdata</div>
</div>
<div class="row g" style="top:466.85px">
<div class="cb"></div>
<svg class="fi" width="14" height="17" viewBox="0 0 14 17"><path d="M0.5 0.6H9.6L13.3 4.3V11.5H0.5Z" fill="#e9e7df"/><path d="M9.6 0.6L13.3 4.3H9.6Z" fill="#d8d4c9"/><rect x="0.5" y="11.5" width="12.8" height="5.1" fill="#c5b8b4"/><circle cx="4" cy="14.05" r="0.95" fill="#fff"/><circle cx="7.05" cy="14.05" r="0.95" fill="#fff"/><circle cx="10.1" cy="14.05" r="0.95" fill="#fff"/></svg>
<div class="c c1" style="letter-spacing:0.457px">kontakt_inc.php</div>
<div class="c c2">53 B</div>
<div class="c c3">-rw-r--r--</div>
<div class="c c4">11/3/2025 11:00 AM</div>
<div class="c c5">ecomdata/ecomdata</div>
</div>
<div class="row" style="top:489.45px">
<div class="cb"></div>
<svg class="fi" width="14" height="17" viewBox="0 0 14 17"><path d="M0.5 0.6H9.6L13.3 4.3V11.5H0.5Z" fill="#e9e7df"/><path d="M9.6 0.6L13.3 4.3H9.6Z" fill="#d8d4c9"/><rect x="0.5" y="11.5" width="12.8" height="5.1" fill="#c5b8b4"/><circle cx="4" cy="14.05" r="0.95" fill="#fff"/><circle cx="7.05" cy="14.05" r="0.95" fill="#fff"/><circle cx="10.1" cy="14.05" r="0.95" fill="#fff"/></svg>
<div class="c c1" style="letter-spacing:0.446px">kundenwerbenkeunden_inc.php</div>
<div class="c c2">53 B</div>
<div class="c c3">-rw-r--r--</div>
<div class="c c4">11/3/2025 11:00 AM</div>
<div class="c c5">ecomdata/ecomdata</div>
</div>
<div class="a" style="left:215px;top:512.5px;width:803px;height:1px;background:#ececec"></div>
<div id="menu"></div>
<div id="focus"></div>
<svg class="a" style="left:422px;top:272.3px" width="11" height="11" viewBox="0 0 11 11"><g fill="none" stroke="#555" stroke-width="0.9" stroke-linejoin="round" stroke-linecap="round"><path d="M5.2 2.4H1.9Q0.9 2.4 0.9 3.4V8.6Q0.9 9.6 1.9 9.6H6.6Q7.6 9.6 7.6 8.6V5.6"/><path d="M3.2 7.1L3.5 5.6L7.6 1.5Q8.2 1 8.7 1.5Q9.2 2 8.7 2.6L4.6 6.7Z"/></g></svg>
<div class="a" style="left:437.4px;top:271.8px;font-size:8.6px;line-height:12px;color:#444;letter-spacing:.43px">Bearbeiten</div>
<svg class="a" style="left:422px;top:293.9px" width="11" height="11" viewBox="0 0 11 11"><g fill="none" stroke="#555" stroke-width="0.9" stroke-linejoin="round" stroke-linecap="round"><path d="M5.2 2.4H1.9Q0.9 2.4 0.9 3.4V8.6Q0.9 9.6 1.9 9.6H6.6Q7.6 9.6 7.6 8.6V5.6"/><path d="M3.2 7.1L3.5 5.6L7.6 1.5Q8.2 1 8.7 1.5Q9.2 2 8.7 2.6L4.6 6.7Z"/></g></svg>
<div class="a" style="left:437.4px;top:293.4px;font-size:8.6px;line-height:12px;color:#444;letter-spacing:.43px">In neuem Tab bearbeiten</div>
<svg class="a" style="left:422px;top:313.7px" width="11" height="11" viewBox="0 0 11 11"><g fill="none" stroke="#555" stroke-width="0.9" stroke-linejoin="round" stroke-linecap="round"><path d="M3.9 3V2.1Q3.9 1.3 4.7 1.3H6.6L8.8 3.5V7Q8.8 7.8 8 7.8H6.5"/><path d="M1.3 4Q1.3 3.2 2.1 3.2H5.5Q6.3 3.2 6.3 4V9.1Q6.3 9.9 5.5 9.9H2.1Q1.3 9.9 1.3 9.1Z"/></g></svg>
<div class="a" style="left:437.4px;top:313.2px;font-size:8.6px;line-height:12px;color:#444;letter-spacing:.43px">Duplizieren</div>
<svg class="a" style="left:422px;top:333.5px" width="11" height="11" viewBox="0 0 11 11"><g fill="none" stroke="#555" stroke-width="0.9" stroke-linejoin="round" stroke-linecap="round"><path d="M0.8 2.2Q0.8 1.4 1.6 1.4H3.6L4.6 2.5H8Q8.8 2.5 8.8 3.3V8.4Q8.8 9.2 8 9.2H1.6Q0.8 9.2 0.8 8.4Z"/><path d="M3 5.9H6.4M5.1 4.6L6.4 5.9L5.1 7.2"/></g></svg>
<div class="a" style="left:437.4px;top:333px;font-size:8.6px;line-height:12px;color:#444;letter-spacing:.43px">Verschieben</div>
<svg class="a" style="left:422px;top:353.3px" width="11" height="11" viewBox="0 0 11 11"><g fill="none" stroke="#555" stroke-width="0.9" stroke-linejoin="round" stroke-linecap="round"><path d="M5.2 1V6.8M3 4.8L5.2 7L7.4 4.8"/><path d="M1.2 6.8V9H9.2V6.8"/></g></svg>
<div class="a" style="left:437.4px;top:352.8px;font-size:8.6px;line-height:12px;color:#444;letter-spacing:.43px">Download</div>
<svg class="a" style="left:422px;top:373.1px" width="11" height="11" viewBox="0 0 11 11"><g fill="none" stroke="#555" stroke-width="0.9" stroke-linejoin="round" stroke-linecap="round"><path d="M1 1.3H9.2V3.2H1Z"/><path d="M1.8 3.2V8.6Q1.8 9.4 2.6 9.4H7.6Q8.4 9.4 8.4 8.6V3.2"/><path d="M4.4 5H5.8"/></g></svg>
<div class="a" style="left:437.4px;top:372.6px;font-size:8.6px;line-height:12px;color:#444;letter-spacing:.43px">Archive</div>
<svg class="a" style="left:422px;top:392.9px" width="11" height="11" viewBox="0 0 11 11"><g fill="none" stroke="#555" stroke-width="0.9" stroke-linejoin="round" stroke-linecap="round"><path d="M1.3 9.2L1.8 7L7.6 1.2Q8.3 0.5 9 1.2Q9.6 1.9 9 2.6L3.2 8.4Z"/><path d="M6.8 2L8.3 3.5"/></g></svg>
<div class="a" style="left:437.4px;top:392.4px;font-size:8.6px;line-height:12px;color:#444;letter-spacing:.43px">Umbenennen</div>
<svg class="a" style="left:422px;top:412.7px" width="11" height="11" viewBox="0 0 11 11"><g fill="none" stroke="#555" stroke-width="0.9" stroke-linejoin="round" stroke-linecap="round"><circle cx="5" cy="5.5" r="4"/><path d="M5 2.6V8.4M3 4.6H7M3.2 6.4H6.8"/></g></svg>
<div class="a" style="left:437.4px;top:412.2px;font-size:8.6px;line-height:12px;color:#444;letter-spacing:.43px">Berechtigungen festlegen</div>
<svg class="a" style="left:422px;top:434.2px" width="11" height="11" viewBox="0 0 11 11"><g fill="none" stroke="#555" stroke-width="0.9" stroke-linejoin="round" stroke-linecap="round"><path d="M1.2 2.4H8.2M3.4 2.2V1.2H6V2.2"/><path d="M2 2.6L2.5 9.2Q2.6 9.8 3.2 9.8H6.2Q6.8 9.8 6.9 9.2L7.4 2.6"/><path d="M4 4.4V8.2M5.4 4.4V8.2"/></g></svg>
<div class="a" style="left:437.4px;top:433.7px;font-size:8.6px;line-height:12px;color:#444;letter-spacing:.43px">Entfernen</div>
<div class="a" style="left:413px;top:428px;width:143px;height:1px;background:#ececec"></div>
<svg class="a" style="left:528.6px;top:276px" width="8.5" height="10.4" viewBox="0 0 9 11"><path d="M3 5.2V1.2Q3 0.4 3.7 0.4Q4.4 0.4 4.4 1.2V4.6L7 5.2Q8.2 5.5 8.2 6.6V8.4Q8.2 10.4 6.2 10.4H4.6Q3.6 10.4 3 9.6L1 7Q0.6 6.3 1.2 6Q1.8 5.7 2.3 6.2Z" fill="#fff" stroke="#333" stroke-width="0.6" stroke-linejoin="round"/></svg>
</body></html>
